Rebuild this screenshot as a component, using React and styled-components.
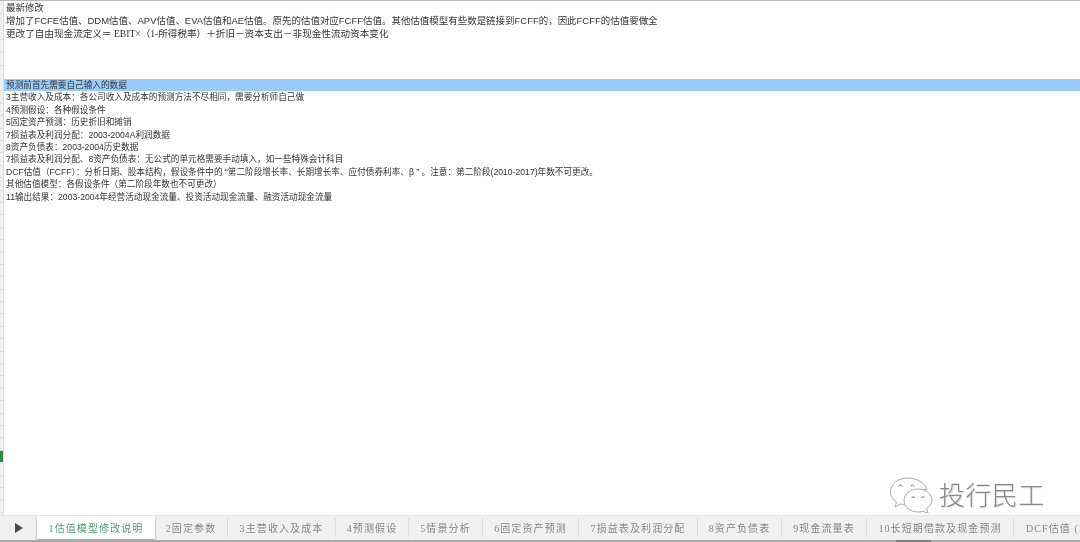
import React from 'react'
import styled, { createGlobalStyle } from 'styled-components'

const GlobalStyle = createGlobalStyle`
  html, body {
    margin: 0;
    padding: 0;
    background: #fff;
  }
`

const Page = styled.div`
  position: relative;
  width: 1080px;
  height: 542px;
  overflow: hidden;
  display: flex;
  flex-direction: column;
  font-family: "Liberation Sans", "Noto Sans CJK SC", sans-serif;
  color: #333;
  background: #fff;
`

const Sheet = styled.div`
  flex: 1;
  min-height: 0;
  display: flex;
  border-top: 1px solid #b9b9b9;
  overflow: hidden;
`

const Gutter = styled.div`
  width: 3px;
  flex: none;
  background: #f0f0f0;
  border-right: 1px solid #dedede;
`

const GutterCell = styled.div`
  height: ${p => p.$h}px;
  box-sizing: border-box;
  border-bottom: 1px solid #dadada;
  background: ${p => (p.$selected ? '#2f8a4d' : 'transparent')};
`

const Rows = styled.div`
  flex: 1;
  min-width: 0;
  padding-left: 2px;
  filter: blur(0.35px);
`

const Row = styled.div`
  height: ${p => p.$h}px;
  line-height: ${p => p.$h + 1}px;
  font-size: ${p => p.$size}px;
  font-family: ${p => (p.$serif ? '"Liberation Serif", "Noto Sans CJK SC", serif' : 'inherit')};
  white-space: nowrap;
  margin-left: ${p => (p.$band ? '-2px' : '0')};
  padding-left: ${p => (p.$band ? '2px' : '0')};
  background: ${p => (p.$band ? '#9accfb' : 'transparent')};
`

const TabBar = styled.div`
  flex: none;
  height: 24px;
  display: flex;
  background: #f1f1f1;
  border-top: 1px solid #e4e4e4;
  overflow: hidden;
`

const PlayCell = styled.div`
  width: 37px;
  flex: none;
  display: flex;
  align-items: center;
  justify-content: center;
`

const Tab = styled.div`
  flex: none;
  height: ${p => (p.$active ? '23px' : '19px')};
  margin-top: ${p => (p.$active ? '0' : '2px')};
  padding-bottom: ${p => (p.$active ? '1px' : '0')};
  box-sizing: border-box;
  width: ${p => p.$w}px;
  display: flex;
  align-items: center;
  justify-content: ${p => (p.$last ? 'flex-start' : 'center')};
  font-family: "Liberation Serif", "Noto Sans CJK SC", serif;
  font-size: 10px;
  letter-spacing: 1.1px;
  white-space: nowrap;
  overflow: hidden;
  color: ${p => (p.$active ? '#4f9d6e' : '#858585')};
  background: ${p => (p.$active ? '#fff' : 'transparent')};
  box-shadow: ${p => (p.$active ? '0 1px 2px #8f8f8f' : 'none')};
  border-right: ${p => (p.$active || p.$last ? 'none' : '1px solid #dcdcdc')};
  filter: blur(0.35px);
`

const TabLast = styled(Tab)`
  padding-left: 12px;
`

const Track = styled.div`
  flex: none;
  height: 2px;
  background: #a9a9a9;
  display: flex;
  padding-left: 896px;
`

const Thumb = styled.div`
  width: 35px;
  background: #7d7d7d;
`

const Watermark = styled.div`
  position: absolute;
  left: 889px;
  top: 477px;
  display: flex;
  align-items: center;
  gap: 6px;
`

const WatermarkText = styled.span`
  font-family: "Noto Sans CJK SC", sans-serif;
  font-weight: 300;
  font-size: 26px;
  line-height: 30px;
  padding-bottom: 3px;
  letter-spacing: 0.4px;
  color: #8a8a8a;
  text-shadow: 1px 1px 0 #e6e6e6;
  filter: blur(0.3px);
`

const upperRows = [
  { text: '最新修改', size: 9.45 },
  { text: '增加了FCFE估值、DDM估值、APV估值、EVA估值和AE估值。原先的估值对应FCFF估值。其他估值模型有些数是链接到FCFF的，因此FCFF的估值要做全', size: 9.48 },
  { text: '更改了自由现金流定义＝ EBIT×（1-所得税率）＋折旧－资本支出－非现金性流动资本变化', size: 9.6, serif: true },
  { text: '', size: 9.45 },
  { text: '', size: 9.45 },
  { text: '', size: 9.45 },
]

const lowerRows = [
  '3主营收入及成本：各公司收入及成本的预测方法不尽相同，需要分析师自己做',
  '4预测假设：各种假设条件',
  '5固定资产预测：历史折旧和摊销',
  '7损益表及利润分配：2003-2004A利润数据',
  '8资产负债表：2003-2004历史数据',
  '7损益表及利润分配、8资产负债表：无公式的单元格需要手动填入，如一些特殊会计科目',
  'DCF估值（FCFF）：分析日期、股本结构，假设条件中的 “第二阶段增长率、长期增长率、应付债券利率、β ” 。注意：第二阶段(2010-2017)年数不可更改。',
  '其他估值模型：各假设条件（第二阶段年数也不可更改）',
  '11输出结果：2003-2004年经营活动现金流量、投资活动现金流量、融资活动现金流量',
]

const tabs = [
  { label: '2固定参数', w: 73 },
  { label: '3主营收入及成本', w: 108 },
  { label: '4预测假设', w: 73 },
  { label: '5情景分析', w: 74 },
  { label: '6固定资产预测', w: 96 },
  { label: '7损益表及利润分配', w: 119 },
  { label: '8资产负债表', w: 84 },
  { label: '9现金流量表', w: 85 },
  { label: '10长短期借款及现金预测', w: 147 },
]

const gutterCells = Array.from({ length: 42 }, (_, i) => i)

const WeChatMark = () => (
  <svg width="44" height="36" viewBox="0 0 44 36" fill="#fff" stroke="#a8a8a8" strokeWidth="1">
    <path d="M18 1C9 1 1.500 7 1.500 14.500c0 4.500 2.500 8 6 10.500L6 30l6-3c2 .6 4 .8 6 .8 1 0 1.500 0 2.500-.2C19 24 19.500 12 38 12.500 36 6 28 1 18 1z" />
    <path d="M29 12c-7.500 0-14 5-14 11.500S21.500 35 29 35c1.500 0 3-.2 4.500-.6L39 36l-1.500-4.500c3.500-2 5.500-5 5.500-8C43 17 36.500 12 29 12z" />
    <path d="M10 9.500a1.500 1.500 0 0 1 3 0M22 9.500a1.500 1.500 0 0 1 3 0M23 21a1.300 1.300 0 0 1 2.600 0M32.500 21a1.300 1.300 0 0 1 2.600 0" fill="none" stroke="#777" />
  </svg>
)

const PlayIcon = () => (
  <svg width="8" height="10" viewBox="0 0 8 10">
    <path d="M0 0l8 5-8 5z" fill="#4a4a4a" />
  </svg>
)

export default function App() {
  return (
    <Page>
      <GlobalStyle />
      <Sheet>
        <Gutter>
          {gutterCells.map(i => (
            <GutterCell key={i} $h={i < 6 ? 13 : 12.4} $selected={i === 36} />
          ))}
        </Gutter>
        <Rows>
          {upperRows.map((row, i) => (
            <Row key={i} $h={13} $size={row.size} $serif={row.serif}>{row.text}</Row>
          ))}
          <Row $h={12.4} $size={8.65} $band>预测前首先需要自己输入的数据</Row>
          {lowerRows.map(text => (
            <Row key={text} $h={12.4} $size={8.65}>{text}</Row>
          ))}
        </Rows>
      </Sheet>
      <TabBar>
        <PlayCell><PlayIcon /></PlayCell>
        <Tab $active $w={118}>1估值模型修改说明</Tab>
        {tabs.map(tab => (
          <Tab key={tab.label} $w={tab.w}>{tab.label}</Tab>
        ))}
        <TabLast $last $w={66}>DCF估值 (FCFF)</TabLast>
      </TabBar>
      <Track><Thumb /></Track>
      <Watermark>
        <WeChatMark />
        <WatermarkText>投行民工</WatermarkText>
      </Watermark>
    </Page>
  )
}
